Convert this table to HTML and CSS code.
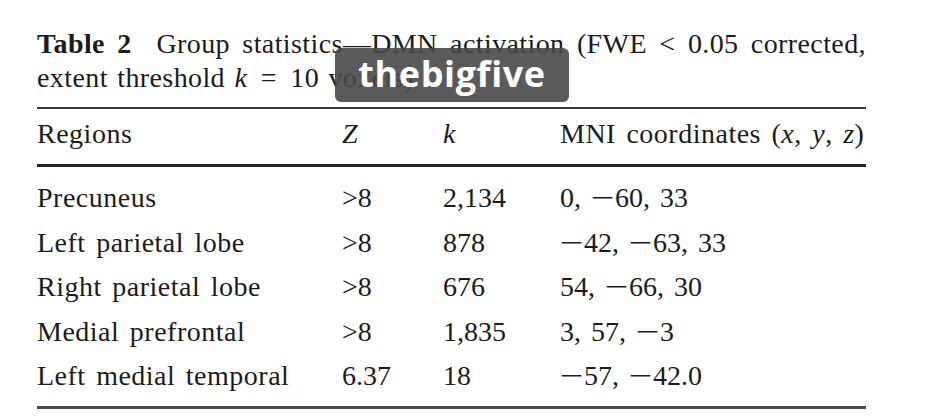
FILE: index.html
```html
<!DOCTYPE html>
<html lang="en">
<head>
<meta charset="utf-8">
<title>Table 2</title>
<link rel="stylesheet" href="styles.css">
</head>
<body>
<div class="page">
  <div class="caption">
    <div class="cap-line cap-first"><b>Table 2</b>&nbsp; Group statistics—DMN activation (FWE &lt; 0.05 corrected,</div>
    <div class="cap-line">extent threshold <i>k</i> <span class="op">=</span> 10 voxels)</div>
  </div>
  <table class="stats">
    <colgroup>
      <col class="c-region"><col class="c-z"><col class="c-k"><col class="c-mni">
    </colgroup>
    <thead>
      <tr>
        <th>Regions</th>
        <th><i>Z</i></th>
        <th><i>k</i></th>
        <th>MNI coordinates (<i>x</i>, <i>y</i>, <i>z</i>)</th>
      </tr>
    </thead>
    <tbody>
      <tr><td>Precuneus</td><td class="num">&gt;8</td><td class="num">2,134</td><td class="num">0, <span class="m">−</span>60, 33</td></tr>
      <tr><td>Left parietal lobe</td><td class="num">&gt;8</td><td class="num">878</td><td class="num"><span class="m">−</span>42, <span class="m">−</span>63, 33</td></tr>
      <tr><td>Right parietal lobe</td><td class="num">&gt;8</td><td class="num">676</td><td class="num">54, <span class="m">−</span>66, 30</td></tr>
      <tr><td>Medial prefrontal</td><td class="num">&gt;8</td><td class="num">1,835</td><td class="num">3, 57, <span class="m">−</span>3</td></tr>
      <tr><td>Left medial temporal</td><td class="num">6.37</td><td class="num">18</td><td class="num"><span class="m">−</span>57, <span class="m">−</span>42.0</td></tr>
    </tbody>
  </table>
  <div class="watermark">thebigfive</div>
</div>
</body>
</html>
```

FILE: styles.css
```css
html, body {
  margin: 0;
  padding: 0;
  background: #ffffff;
}
body {
  width: 939px;
  height: 419px;
  overflow: hidden;
  font-family: "Liberation Serif", "Times New Roman", serif;
  font-size: 28px;
  color: #1b1b1b;
}
.page {
  position: relative;
  padding: 27px 0 0 37px;
  width: 829px;
}
.caption {
  line-height: 34px;
}
.cap-first {
  text-align: justify;
  text-align-last: justify;
}
.cap-line {
  letter-spacing: 0.4px;
  word-spacing: 2px;
}
.cap-line b {
  font-weight: bold;
}
.op {
  margin: 0 4px;
}
.stats {
  margin-top: 12px;
  width: 829px;
  table-layout: fixed;
  border-collapse: collapse;
  line-height: 44.5px;
}
.c-region { width: 305px; }
.c-z { width: 101px; }
.c-k { width: 117px; }
.c-mni { width: 306px; }
.stats thead tr {
  border-top: 2px solid #3a3a3a;
  border-bottom: 3px solid #262626;
}
.stats th {
  font-weight: normal;
  text-align: left;
  padding: 3px 0 8px 0;
  line-height: 44px;
  white-space: nowrap;
  letter-spacing: 0.5px;
  word-spacing: 3px;
}
.stats td {
  padding: 0;
  white-space: nowrap;
  letter-spacing: 0.5px;
  word-spacing: 3px;
}
.stats td.num {
  letter-spacing: 0;
}
.m {
  display: inline-block;
  width: 24px;
  transform: scaleX(1.5);
  transform-origin: 0 50%;
}
.stats tbody tr:first-child td {
  padding-top: 9px;
}
.stats tbody tr:last-child td {
  padding-bottom: 7px;
}
.stats tbody tr:last-child {
  border-bottom: 3px solid #4a4a4a;
}
.watermark {
  position: absolute;
  left: 335px;
  top: 48px;
  width: 234px;
  height: 54px;
  box-sizing: border-box;
  border-radius: 6px;
  background: rgba(72, 72, 72, 0.9);
  color: #ffffff;
  font-family: "Open Sans", "Liberation Sans", sans-serif;
  font-weight: 700;
  font-size: 36px;
  line-height: 52px;
  text-align: center;
  letter-spacing: 0.6px;
}
```
